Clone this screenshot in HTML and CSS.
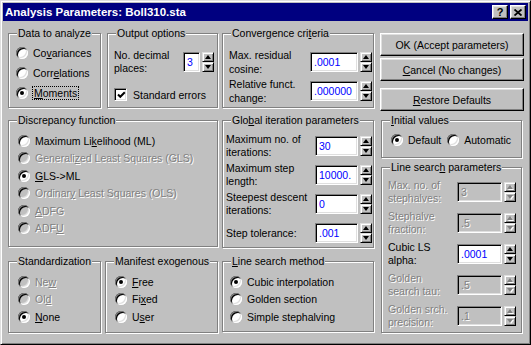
FILE: index.html
```html
<!DOCTYPE html>
<html lang="en">

<head>
  <meta charset="UTF-8">
  <title>Analysis Parameters: Boll310.sta</title>
  <link rel="stylesheet" href="styles.css">
</head>

<body>
  <div class="window">
    <!-- Title bar -->
    <div class="titlebar">
      <span class="title">Analysis Parameters: Boll310.sta</span>
      <div class="caption-buttons">
        <span class="cap-btn">?</span>
        <span class="cap-btn">
          <svg width="8" height="7" viewBox="0 0 8 7"><path d="M0.5 0.5 L7.5 6.5 M7.5 0.5 L0.5 6.5" stroke="#000" stroke-width="1.8" /></svg>
        </span>
      </div>
    </div>

    <div class="content">
      <div class="grid">
        <div class="pair first-pair">
          <fieldset class="group data">
            <legend>Data to analyze</legend>
            <div class="options tall">
              <div class="opt"><span class="radio"></span><span>Co<u>v</u>ariances</span></div>
              <div class="opt"><span class="radio"></span><span>Corr<u>e</u>lations</span></div>
              <div class="opt"><span class="radio on"></span><span class="focus"><u>M</u>oments</span></div>
            </div>
          </fieldset>
          <fieldset class="group output">
            <legend>Output options</legend>
            <div class="output-body">
              <div class="field-row">
                <span class="label">No. decimal<br>places:</span>
                <div class="spin">
                  <span class="field narrow">3</span>
                  <span class="arrows"><span class="arrow up"></span><span class="arrow down"></span></span>
                </div>
              </div>
              <div class="check-row"><span class="check"><svg width="9" height="9" viewBox="0 0 9 9"><polyline points="1,3.5 3.3,5.8 7.8,1.3" fill="none" stroke="#000" stroke-width="2" /></svg></span><span>Standard errors</span></div>
            </div>
          </fieldset>
        </div>

        <fieldset class="group convergence">
          <legend>Convergence cri<u>t</u>eria</legend>
          <div class="rows conv-rows">
            <div class="field-row">
              <span class="label">Max. residual<br>cosine:</span>
              <div class="spin">
                <span class="field w47">.0001</span>
                <span class="arrows"><span class="arrow up"></span><span class="arrow down"></span></span>
              </div>
            </div>
            <div class="field-row">
              <span class="label">Relative funct.<br>change:</span>
              <div class="spin">
                <span class="field w47">.000000</span>
                <span class="arrows"><span class="arrow up"></span><span class="arrow down"></span></span>
              </div>
            </div>
          </div>
        </fieldset>

        <fieldset class="group discrepancy">
          <legend>Discrepancy function</legend>
          <div class="options">
            <div class="opt"><span class="radio"></span><span>Maximum Li<u>k</u>elihood (ML)</span></div>
            <div class="opt off"><span class="radio"></span><span>Generali<u>z</u>ed Least Squares (GLS)</span></div>
            <div class="opt"><span class="radio on"></span><span><u>G</u>LS-&gt;ML</span></div>
            <div class="opt off"><span class="radio"></span><span>Ordinar<u>y</u> Least Squares (OLS)</span></div>
            <div class="opt off"><span class="radio"></span><span><u>A</u>DFG</span></div>
            <div class="opt off"><span class="radio"></span><span>ADF<u>U</u></span></div>
          </div>
        </fieldset>

        <fieldset class="group global">
          <legend>Glo<u>b</u>al iteration parameters</legend>
          <div class="rows global-rows">
            <div class="field-row">
              <span class="label">Maximum no. of<br>iterations:</span>
              <div class="spin">
                <span class="field w43">30</span>
                <span class="arrows"><span class="arrow up"></span><span class="arrow down"></span></span>
              </div>
            </div>
            <div class="field-row">
              <span class="label">Maximum step<br>length:</span>
              <div class="spin">
                <span class="field w43">10000.</span>
                <span class="arrows"><span class="arrow up"></span><span class="arrow down"></span></span>
              </div>
            </div>
            <div class="field-row">
              <span class="label">Steepest descent<br>iterations:</span>
              <div class="spin">
                <span class="field w43">0</span>
                <span class="arrows"><span class="arrow up"></span><span class="arrow down"></span></span>
              </div>
            </div>
            <div class="field-row">
              <span class="label single">Step tolerance:</span>
              <div class="spin">
                <span class="field w43">.001</span>
                <span class="arrows"><span class="arrow up"></span><span class="arrow down"></span></span>
              </div>
            </div>
          </div>
        </fieldset>

        <div class="pair last-pair">
          <fieldset class="group standard">
            <legend>Standardization</legend>
            <div class="options">
              <div class="opt off"><span class="radio"></span><span>Ne<u>w</u></span></div>
              <div class="opt off"><span class="radio"></span><span>Ol<u>d</u></span></div>
              <div class="opt"><span class="radio on"></span><span><u>N</u>one</span></div>
            </div>
          </fieldset>
          <fieldset class="group manifest">
            <legend>Manifest exogenous</legend>
            <div class="options">
              <div class="opt"><span class="radio on"></span><span><u>F</u>ree</span></div>
              <div class="opt"><span class="radio"></span><span>Fi<u>x</u>ed</span></div>
              <div class="opt"><span class="radio"></span><span>U<u>s</u>er</span></div>
            </div>
          </fieldset>
        </div>

        <fieldset class="group method">
          <legend><u>L</u>ine search method</legend>
          <div class="options">
            <div class="opt"><span class="radio on"></span><span>Cubic interpolation</span></div>
            <div class="opt"><span class="radio"></span><span>Golden section</span></div>
            <div class="opt"><span class="radio"></span><span>Simple stephalving</span></div>
          </div>
        </fieldset>
      </div>

      <!-- Right hand column -->
      <div class="side">
        <div class="button"><span>OK (Accept parameters)</span></div>
        <div class="button"><span><u>C</u>ancel (No changes)</span></div>
        <div class="button restore"><span><u>R</u>estore Defaults</span></div>

        <fieldset class="group initial">
          <legend><u>I</u>nitial values</legend>
          <div class="options inline">
            <div class="opt"><span class="radio on"></span><span>Default</span></div>
            <div class="opt"><span class="radio"></span><span>Automatic</span></div>
          </div>
        </fieldset>

        <fieldset class="group linesearch">
          <legend>Line searc<u>h</u> parameters</legend>
          <div class="rows ls-rows">
            <div class="field-row off">
              <span class="label">Max. no. of<br>stephalves:</span>
              <div class="spin">
                <span class="field w44">3</span>
                <span class="arrows"><span class="arrow up"></span><span class="arrow down"></span></span>
              </div>
            </div>
            <div class="field-row off">
              <span class="label">Stephalve<br>fraction:</span>
              <div class="spin">
                <span class="field w44">.5</span>
                <span class="arrows"><span class="arrow up"></span><span class="arrow down"></span></span>
              </div>
            </div>
            <div class="field-row">
              <span class="label">Cubic LS<br>alpha:</span>
              <div class="spin">
                <span class="field w44">.0001</span>
                <span class="arrows"><span class="arrow up"></span><span class="arrow down"></span></span>
              </div>
            </div>
            <div class="field-row off">
              <span class="label">Golden<br>search tau:</span>
              <div class="spin">
                <span class="field w44">.5</span>
                <span class="arrows"><span class="arrow up"></span><span class="arrow down"></span></span>
              </div>
            </div>
            <div class="field-row off">
              <span class="label">Golden srch.<br>precision:</span>
              <div class="spin">
                <span class="field w44">.1</span>
                <span class="arrows"><span class="arrow up"></span><span class="arrow down"></span></span>
              </div>
            </div>
          </div>
        </fieldset>
      </div>
    </div>
  </div>
</body>

</html>
```

FILE: styles.css
```css
/* Windows 95 style dialog */
body {
  margin: 0;
  font-family: "Liberation Sans", Arial, sans-serif;
  font-size: 10.5px;
  color: #000;
  background: #c0c0c0;
}

u {
  text-underline-offset: 1px;
}

.window {
  box-sizing: border-box;
  width: 531px;
  height: 345px;
  background: #c0c0c0;
  border: 1px solid;
  border-color: #dfdfdf #000 #000 #dfdfdf;
  box-shadow: inset 1px 1px 0 #fff, inset -1px -1px 0 #808080;
  padding: 2px;
}

/* Title bar */
.titlebar {
  height: 18px;
  background: #000080;
  color: #fff;
  display: flex;
  align-items: center;
  justify-content: space-between;
  padding: 0 2px;
}

.title {
  font-weight: bold;
  font-size: 11.5px;
}

.caption-buttons {
  display: flex;
  gap: 2px;
}

.cap-btn {
  box-sizing: border-box;
  width: 16px;
  height: 14px;
  background: #c0c0c0;
  color: #000;
  font-weight: bold;
  font-size: 11px;
  line-height: 1;
  display: flex;
  align-items: center;
  justify-content: center;
  border: 1px solid;
  border-color: #fff #000 #000 #fff;
  box-shadow: inset -1px -1px 0 #808080, inset 1px 1px 0 #dfdfdf;
}

/* Main area */
.content {
  display: flex;
  gap: 6px;
  padding: 6px 0 0 5px;
}

.grid {
  display: grid;
  grid-template-columns: 210px 152px;
  grid-template-rows: 81px 135px 78px;
  column-gap: 4px;
  row-gap: 6px;
}

.pair {
  display: flex;
}

.first-pair {
  gap: 6px;
}

.last-pair {
  gap: 4px;
}

/* Group boxes */
.group {
  box-sizing: border-box;
  margin: 0;
  padding: 0;
  min-width: 0;
  border: 1px solid #808080;
  box-shadow: inset 1px 1px 0 #fff, 1px 1px 0 #fff;
}

.group legend {
  margin-left: 8px;
  padding: 0 1px;
  line-height: 13px;
  background: #c0c0c0;
}

.data,
.standard {
  width: 93px;
}

.output,
.manifest {
  flex: 1;
}

.discrepancy {
  height: 133px;
}

.global {
  height: 134px;
}

.method {
  height: 77px;
}

/* Radio buttons */
.options {
  display: flex;
  flex-direction: column;
  padding: 5px 0 0 9px;
}

.opt {
  display: flex;
  align-items: center;
  gap: 5px;
  height: 17.5px;
  white-space: nowrap;
}

.options.tall {
  padding: 3px 0 0 7px;
}

.options.tall .opt {
  height: 20px;
}

.method .options {
  padding-left: 7px;
}

.opt.off {
  color: #808080;
  text-shadow: 1px 1px 0 #fff;
}

.radio {
  box-sizing: border-box;
  width: 12px;
  height: 12px;
  flex: none;
  border-radius: 50%;
  background: #fff;
  box-shadow: inset 1px 1px 0 #808080, inset -1px -1px 0 #fff, inset 2px 2px 0 #000, inset -2px -2px 0 #dfdfdf;
  display: flex;
  align-items: center;
  justify-content: center;
}

.opt.off .radio {
  background: #c0c0c0;
}

.radio.on::after {
  content: "";
  width: 4px;
  height: 4px;
  border-radius: 50%;
  background: #000;
}

.focus {
  outline: 1px dotted #000;
  padding: 0 1px;
}

/* Output options */
.output-body {
  padding: 8px 3px 0 6px;
}

.check-row {
  display: flex;
  align-items: center;
  gap: 6px;
  margin-top: 12px;
}

.check {
  box-sizing: border-box;
  width: 13px;
  height: 13px;
  background: #fff;
  border: 1px solid;
  border-color: #808080 #fff #fff #808080;
  box-shadow: inset 1px 1px 0 #000, inset -1px -1px 0 #dfdfdf;
  display: flex;
  align-items: center;
  justify-content: center;
}

.check svg {
  display: block;
  margin: 1px 0 0 1px;
}

/* Label + spin rows */
.rows {
  display: flex;
  flex-direction: column;
}

.field-row {
  display: flex;
  align-items: center;
  justify-content: space-between;
  height: 28px;
}

.label {
  line-height: 13px;
  white-space: nowrap;
}

.conv-rows {
  padding: 8px 1px 0 6px;
  gap: 1px;
}

.conv-rows .label {
  line-height: 14px;
}

.global-rows {
  padding: 5px 1px 0 3px;
  gap: 1px;
}

.ls-rows {
  padding: 3px 5px 0 6px;
  gap: 2px;
}

.ls-rows .field-row {
  height: 29px;
}

.field-row.off .label {
  color: #808080;
  text-shadow: 1px 1px 0 #fff;
}

.spin {
  display: flex;
  gap: 2px;
}

.field {
  box-sizing: border-box;
  height: 20px;
  background: #fff;
  color: #0000ff;
  padding-left: 3px;
  display: flex;
  align-items: center;
  border: 1px solid;
  border-color: #808080 #fff #fff #808080;
  box-shadow: inset 1px 1px 0 #000, inset -1px -1px 0 #dfdfdf;
}

.field.narrow {
  width: 17px;
}

.w47 {
  width: 48px;
}

.w43 {
  width: 43px;
}

.w44 {
  width: 45px;
}

.field-row.off .field {
  background: #c0c0c0;
  color: #808080;
  text-shadow: 1px 1px 0 #fff;
}

.arrows {
  display: flex;
  flex-direction: column;
}

.arrow {
  box-sizing: border-box;
  width: 12px;
  height: 10px;
  background: #c0c0c0;
  border: 1px solid;
  border-color: #dfdfdf #000 #000 #dfdfdf;
  box-shadow: inset 1px 1px 0 #fff, inset -1px -1px 0 #808080;
  display: flex;
  align-items: center;
  justify-content: center;
}

.arrow::before {
  content: "";
  width: 0;
  height: 0;
  border-left: 3.5px solid transparent;
  border-right: 3.5px solid transparent;
}

.arrow.up::before {
  border-bottom: 4px solid #000;
}

.arrow.down::before {
  border-top: 4px solid #000;
}

.field-row.off .arrow.up::before {
  border-bottom-color: #808080;
  filter: drop-shadow(1px 1px 0 #fff);
}

.field-row.off .arrow.down::before {
  border-top-color: #808080;
  filter: drop-shadow(1px 1px 0 #fff);
}

/* Right column */
.side {
  width: 144px;
  display: flex;
  flex-direction: column;
  padding-top: 6px;
}

.button {
  box-sizing: border-box;
  height: 23px;
  margin-bottom: 2px;
  display: flex;
  align-items: center;
  justify-content: center;
  background: #c0c0c0;
  border: 1px solid;
  border-color: #fff #000 #000 #fff;
  box-shadow: inset -1px -1px 0 #808080, inset 1px 1px 0 #dfdfdf;
}

.button.restore {
  margin-top: 5px;
  margin-bottom: 3px;
}

.side .group {
  margin: 0 2px 3px 1px;
}

.initial {
  height: 44px;
}

.options.inline {
  flex-direction: row;
  gap: 6px;
  padding: 3px 0 0 9px;
}

.options.inline .opt {
  height: 20px;
}

.linesearch {
  height: 172px;
}
```
